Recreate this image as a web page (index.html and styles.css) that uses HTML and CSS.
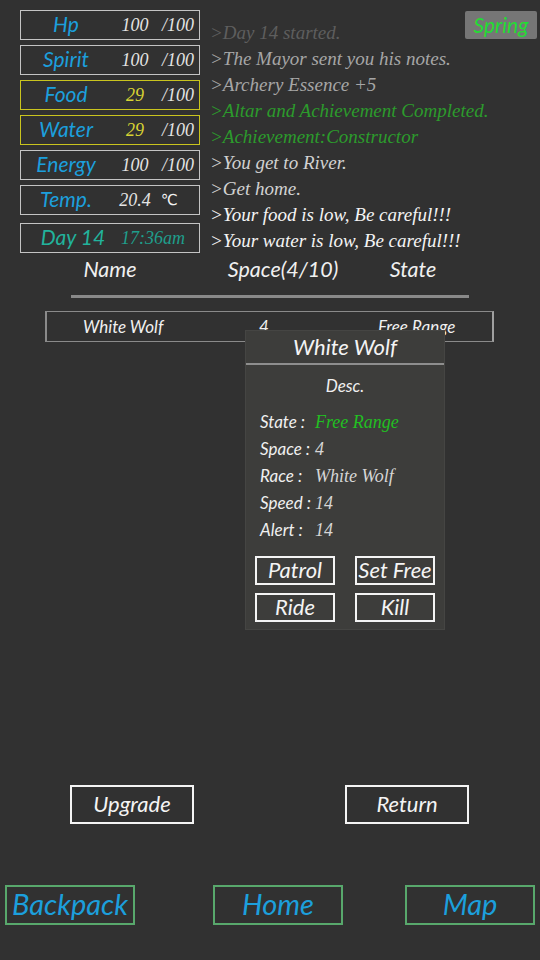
FILE: index.html
```html
<!DOCTYPE html>
<html>
<head>
<meta charset="utf-8">
<link rel="stylesheet" href="styles.css">
</head>
<body>
<div class="page">
  <div class="season">Spring</div>
  <div class="top">
    <div class="stats">
      <div class="stat"><span class="lbl">Hp</span><span class="val">100</span><span class="max">/100</span></div>
      <div class="stat"><span class="lbl">Spirit</span><span class="val">100</span><span class="max">/100</span></div>
      <div class="stat warn"><span class="lbl">Food</span><span class="val">29</span><span class="max">/100</span></div>
      <div class="stat warn"><span class="lbl">Water</span><span class="val">29</span><span class="max">/100</span></div>
      <div class="stat"><span class="lbl">Energy</span><span class="val">100</span><span class="max">/100</span></div>
      <div class="stat"><span class="lbl">Temp.</span><span class="val">20.4</span><span class="unit">℃</span></div>
      <div class="stat day"><span class="lbl">Day 14</span><span class="time">17:36am</span></div>
    </div>
    <div class="log">
      <div class="l dim">&gt;Day 14 started.</div>
      <div class="l gray">&gt;The Mayor sent you his notes.</div>
      <div class="l gray">&gt;Archery Essence +5</div>
      <div class="l green">&gt;Altar and Achievement Completed.</div>
      <div class="l green">&gt;Achievement:Constructor</div>
      <div class="l light">&gt;You get to River.</div>
      <div class="l light">&gt;Get home.</div>
      <div class="l white">&gt;Your food is low, Be careful!!!</div>
      <div class="l white">&gt;Your water is low, Be careful!!!</div>
    </div>
  </div>

  <div class="thead">
    <span>Name</span><span>Space(4/10)</span><span>State</span>
  </div>
  <div class="rule"></div>
  <div class="row">
    <span class="c1">White Wolf</span><span class="c2">4</span><span class="c3">Free Range</span>
  </div>

  <div class="popup">
    <div class="ptitle">White Wolf</div>
    <div class="pdesc">Desc.</div>
    <div class="plist">
      <div class="pr"><span class="pk">State :</span><span class="pv greenv">Free Range</span></div>
      <div class="pr"><span class="pk">Space :</span><span class="pv">4</span></div>
      <div class="pr"><span class="pk">Race :</span><span class="pv">White Wolf</span></div>
      <div class="pr"><span class="pk">Speed :</span><span class="pv">14</span></div>
      <div class="pr"><span class="pk">Alert :</span><span class="pv">14</span></div>
    </div>
    <div class="pbtns">
      <div class="pbtn">Patrol</div>
      <div class="pbtn">Set Free</div>
      <div class="pbtn">Ride</div>
      <div class="pbtn">Kill</div>
    </div>
  </div>

  <div class="actions">
    <div class="abtn">Upgrade</div>
    <div class="abtn">Return</div>
  </div>
  <div class="nav">
    <div class="nbtn">Backpack</div>
    <div class="nbtn">Home</div>
    <div class="nbtn">Map</div>
  </div>
</div>
</body>
</html>
```

FILE: styles.css
```css
* { box-sizing: border-box; }
html, body { margin: 0; padding: 0; background: #313131; }
.page {
  position: relative;
  width: 540px;
  height: 960px;
  display: flex;
  flex-direction: column;
  font-family: Lato, "Open Sans", sans-serif;
  font-style: italic;
  color: #eeeeee;
}
.season {
  position: absolute;
  left: 465px; top: 11px;
  width: 72px; height: 28px;
  background: #767676;
  border-radius: 2px;
  color: #22dd33;
  font-size: 21px;
  line-height: 27px;
  text-align: center;
}
.top { display: flex; padding-top: 10px; }
.stats {
  margin-left: 20px;
  width: 180px;
  display: flex;
  flex-direction: column;
  gap: 5px;
}
.stat {
  height: 30px;
  border: 1px solid #c4c4c4;
  display: flex;
  align-items: center;
}
.stat.warn { border-color: #c9c41e; }
.stat.day { margin-top: 3px; }
.lbl {
  width: 90px;
  text-align: center;
  color: #1c9fdc;
  font-size: 21px;
  line-height: 26px;
  padding-bottom: 2px;
}
.val {
  width: 48px;
  text-align: center;
  font-family: "Liberation Serif", serif;
  font-size: 18px;
  color: #e4e4e4;
}
.warn .val { color: #d8d433; }
.max {
  width: 35px;
  text-align: right;
  font-family: "Liberation Serif", serif;
  font-size: 18px;
  color: #e4e4e4;
}
.unit {
  margin-left: 2px;
  font-family: "DejaVu Sans", sans-serif;
  font-style: normal;
  font-size: 15px;
  color: #f4f4f4;
}
.day .lbl { width: 100px; color: #22b39c; font-size: 21px; padding-left: 4px; }
.time {
  font-family: "Liberation Serif", serif;
  font-size: 18px;
  color: #1f9f8c;
}
.log {
  margin-left: 10px;
  padding-top: 10px;
  font-family: "Liberation Serif", serif;
  font-size: 19px;
  line-height: 26px;
}
.l { white-space: nowrap; }
.dim { color: #5e5e5e; }
.gray { color: #a6a6a6; }
.green { color: #2c9b2c; }
.light { color: #d2d2d2; }
.white { color: #f4f4f4; }

.thead {
  margin-left: 40px;
  display: grid;
  grid-template-columns: 140px 206px 54px;
  height: 30px;
  align-items: center;
  font-size: 21.5px;
  color: #f0f0f0;
}
.thead span { text-align: center; white-space: nowrap; }
.rule {
  margin: 11px 0 0 71px;
  width: 398px;
  height: 3px;
  background: #898989;
}
.row {
  margin: 13px 0 0 45px;
  width: 449px;
  height: 31px;
  border: 1px solid #8a8a8a;
  border-left-width: 2px;
  border-right: 2px solid #a0a0a0;
  display: flex;
  align-items: center;
  font-size: 17px;
  color: #f0f0f0;
}
.c1 { margin-left: 36px; width: 176px; }
.c2 { width: 119px; }

.popup {
  position: absolute;
  left: 245px; top: 330px;
  width: 200px; height: 300px;
  background: #3d3d3b;
  border: 1px solid #454543;
  display: flex;
  flex-direction: column;
}
.ptitle {
  height: 34px;
  line-height: 32px;
  text-align: center;
  font-size: 22px;
  color: #f4f4f4;
  border-bottom: 2px solid #8e8e8e;
}
.pdesc {
  margin-top: 10px;
  text-align: center;
  font-size: 17px;
  line-height: 22px;
  color: #f0f0f0;
}
.plist {
  margin-top: 12px;
  padding-left: 14px;
  display: flex;
  flex-direction: column;
}
.pr { height: 27px; display: flex; align-items: center; }
.pk { width: 55px; font-size: 17px; color: #f0f0f0; white-space: nowrap; padding-bottom: 3px; }
.pv { font-family: "Liberation Serif", serif; font-size: 18px; color: #d6d6d6; }
.greenv { color: #22bf22; }
.pbtns {
  margin: 12px 0 0 9px;
  display: grid;
  grid-template-columns: 80px 80px;
  column-gap: 20px;
  row-gap: 8px;
}
.pbtn {
  height: 29px;
  border: 2px solid #f4f4f4;
  text-align: center;
  line-height: 24px;
  font-size: 22px;
  color: #f4f4f4;
  white-space: nowrap;
}
.actions {
  margin-top: auto;
  padding: 0 0 0 70px;
  display: flex;
  gap: 151px;
}
.abtn {
  width: 124px; height: 39px;
  border: 2px solid #f4f4f4;
  text-align: center;
  line-height: 33px;
  font-size: 22px;
  color: #f4f4f4;
}
.nav {
  margin-top: 61px;
  margin-bottom: 35px;
  display: flex;
  justify-content: space-between;
  padding: 0 5px;
}
.nbtn {
  width: 130px; height: 40px;
  border: 2px solid #58a86c;
  text-align: center;
  line-height: 34px;
  font-size: 29px;
  color: #1c9fdc;
}
.nbtn:nth-child(2) { margin-left: 16px; }
```
